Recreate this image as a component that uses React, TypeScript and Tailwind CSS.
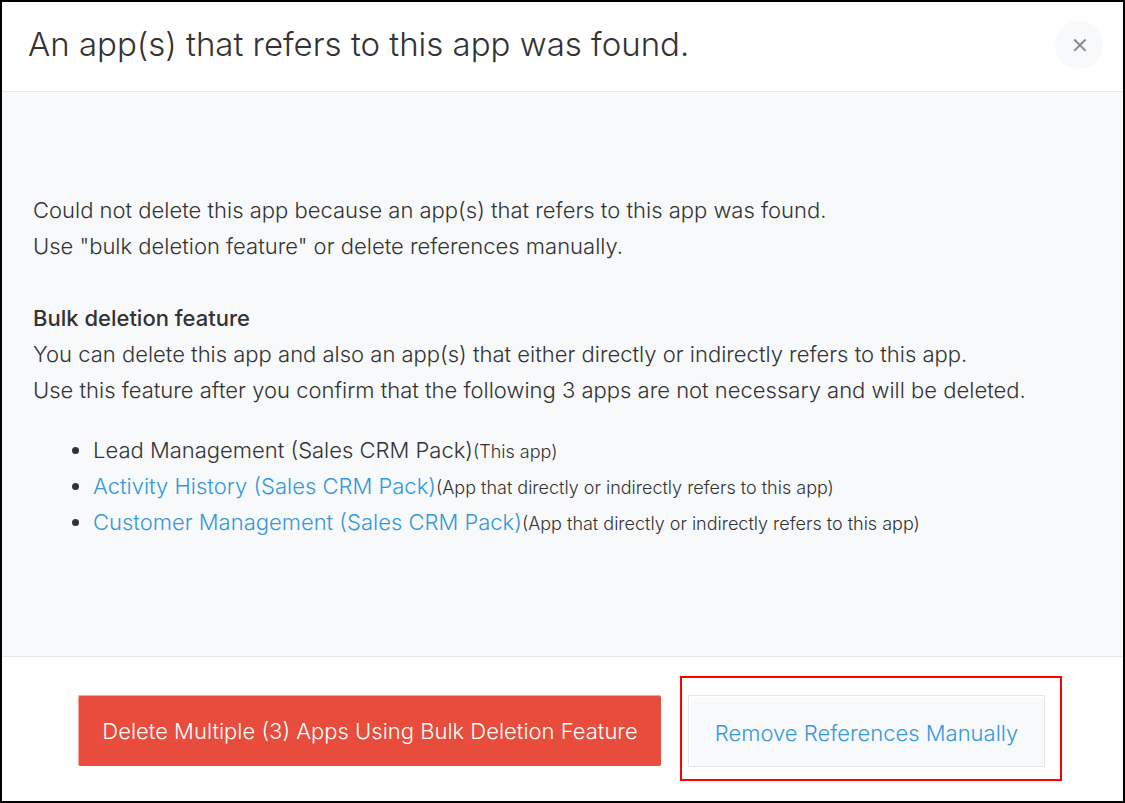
import { useState } from 'react'

interface ReferringApp {
  name:  string
  note:  string
  href?: string
}

const APPS: ReferringApp[] = [
  { name: 'Lead Management (Sales CRM Pack)', note: '(This app)' },
  { name: 'Activity History (Sales CRM Pack)', note: '(App that directly or indirectly refers to this app)', href: '#activity-history' },
  { name: 'Customer Management (Sales CRM Pack)', note: '(App that directly or indirectly refers to this app)', href: '#customer-management' },
]

function CloseIcon() {
  return (
    <svg width="16" height="14" viewBox="0 0 16 14" fill="none" stroke="#8a8a8a" strokeWidth="2" aria-hidden="true">
      <path d="M3.2 1.5 14.6 12.9M14.6 1.5 3.2 12.9" />
    </svg>
  )
}

export default function App() {
  const [open, setOpen] = useState(true)

  if (!open) return null

  return (
    <div
      role="dialog"
      aria-labelledby="dialog-title"
      className="flex min-h-screen flex-col border-2 border-black bg-white font-['Inter','Liberation_Sans',sans-serif] text-[22px] leading-9 font-light text-[#333]"
    >
      <header className="flex items-center justify-between border-b border-[#e3e7e8] pt-4 pr-5 pb-5 pl-[26px]">
        <h1 id="dialog-title" className="text-[33px] leading-[53px] font-light">
          An app(s) that refers to this app was found.
        </h1>
        <button
          type="button"
          aria-label="Close"
          onClick={() => setOpen(false)}
          className="flex size-12 cursor-pointer items-center justify-center rounded-full bg-[#f8f9fb]"
        >
          <CloseIcon />
        </button>
      </header>

      <main className="flex flex-1 flex-col justify-center bg-[#f8f9fb] px-[31px] pb-4">
        <p>Could not delete this app because an app(s) that refers to this app was found.</p>
        <p>Use "bulk deletion feature" or delete references manually.</p>

        <h2 className="mt-9 font-medium">Bulk deletion feature</h2>
        <p>You can delete this app and also an app(s) that either directly or indirectly refers to this app.</p>
        <p>Use this feature after you confirm that the following 3 apps are not necessary and will be deleted.</p>

        <ul className="mt-6 list-disc pl-[60px]">
          {APPS.map(app => (
            <li key={app.name}>
              {app.href
                ? <a href={app.href} className="text-[#3498db]">{app.name}</a>
                : app.name}
              <span className="text-[18px] leading-none">{app.note}</span>
            </li>
          ))}
        </ul>
      </main>

      <footer className="flex items-start justify-center gap-[27px] border-t border-[#e3e7e8] pt-[38px] pr-0.5 pb-[34px]">
        <button
          type="button"
          className="h-[71px] w-[583px] cursor-pointer rounded-xs border-t border-l border-[#f3a59c] bg-[#e74c3c] text-white"
        >
          Delete Multiple (3) Apps Using Bulk Deletion Feature
        </button>
        <div className="relative">
          <button
            type="button"
            className="h-[72px] w-[357px] cursor-pointer border border-[#e3e7e8] bg-[#f8f9fb] pt-1 text-[#3498db] shadow-[inset_2px_2px_0_#fff]"
          >
            Remove References Manually
          </button>
          {/* highlight frame */}
          <div className="pointer-events-none absolute -top-[19px] -right-[17px] -bottom-[14px] -left-2 border-2 border-[#f00]" />
        </div>
      </footer>
    </div>
  )
}
